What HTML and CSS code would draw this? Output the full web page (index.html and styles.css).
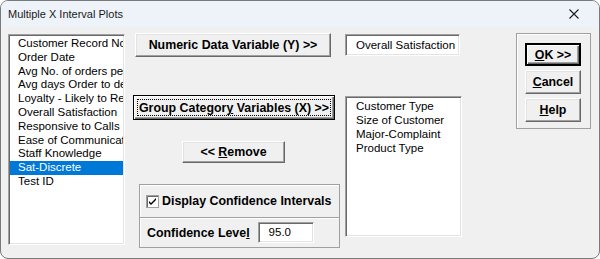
FILE: index.html
```html
<!DOCTYPE html>
<html lang="en">
<head>
  <meta charset="UTF-8">
  <title>Multiple X Interval Plots</title>
  <link rel="stylesheet" href="styles.css">
</head>
<body>

<div class="window">
  <div class="titlebar">
    <span class="title">Multiple X Interval Plots</span>
    <svg class="close" width="10" height="10" viewBox="0 0 10 10">
      <path d="M0.5 0.5 L9.5 9.5 M9.5 0.5 L0.5 9.5" stroke="#1a1a1a" stroke-width="1.1" fill="none"/>
    </svg>
  </div>

  <div class="content">
    <ul class="listbox vars">
      <li>Customer Record No</li>
      <li>Order Date</li>
      <li>Avg No. of orders per month</li>
      <li>Avg days Order to delivery</li>
      <li>Loyalty - Likely to Recommend</li>
      <li>Overall Satisfaction</li>
      <li>Responsive to Calls</li>
      <li>Ease of Communication</li>
      <li>Staff Knowledge</li>
      <li class="selected">Sat-Discrete</li>
      <li>Test ID</li>
    </ul>

    <div class="middle">
      <button class="btn numeric">Numeric Data Variable (Y) &gt;&gt;</button>
      <button class="btn default group"><span class="focus">Group Categor<u>y</u> Variables (X) &gt;&gt;</span></button>
      <button class="btn remove">&lt;&lt; <u>R</u>emove</button>
      <div class="panel check-panel">
        <svg class="checkbox" width="13" height="13" viewBox="0 0 13 13">
          <rect x="0.5" y="0.5" width="12" height="12" fill="#fff" stroke="#a0a0a0"/>
          <path d="M1.5 12 V1.5 H12" stroke="#696969" fill="none"/>
          <path d="M3 6 L5 8 L10 3 L10 5 L5 10 L3 8 Z" fill="#000"/>
        </svg>
        <span class="label">Display Confidence Intervals</span>
      </div>
      <div class="panel level-panel">
        <span class="label">Confidence Leve<u>l</u></span>
        <div class="field level">95.0</div>
      </div>
    </div>

    <div class="right">
      <div class="field ybox">Overall Satisfaction</div>
      <ul class="listbox xvars">
        <li>Customer Type</li>
        <li>Size of Customer</li>
        <li>Major-Complaint</li>
        <li>Product Type</li>
      </ul>
    </div>

    <div class="actions">
      <button class="btn default ok"><u>O</u>K &gt;&gt;</button>
      <button class="btn"><u>C</u>ancel</button>
      <button class="btn"><u>H</u>elp</button>
    </div>
  </div>
</div>

</body>
</html>
```

FILE: styles.css
```css
body {
  margin: 0;
  background: #ffffff;
  font-family: "Liberation Sans", Arial, sans-serif;
  font-size: 11.5px;
  color: #000;
}

.window {
  width: 600px;
  height: 259px;
  box-sizing: border-box;
  border: 1px solid #7a7a7a;
  border-radius: 8px;
  background: #f0f0f0;
  overflow: hidden;
}

.titlebar {
  height: 26px;
  background: #eef3f9;
  display: flex;
  align-items: center;
  justify-content: space-between;
  padding: 0 20px 0 7px;
}

.title {
  font-size: 11px;
  color: #1a1a1a;
}

.content {
  display: flex;
  align-items: flex-start;
  padding: 7px 0 0 7px;
}

/* sunken white fields */
.listbox,
.field {
  background: #fff;
  box-sizing: border-box;
  border: 1px solid;
  border-color: #a0a0a0 #fff #fff #a0a0a0;
  box-shadow: inset 1px 1px #696969, inset -1px -1px #e3e3e3;
}

.listbox {
  list-style: none;
  margin: 0;
  padding: 2px 1px;
  overflow: hidden;
}

.listbox li {
  white-space: nowrap;
  overflow: hidden;
}

.vars {
  width: 117px;
  height: 211px;
}

.vars li {
  height: 13.8px;
  line-height: 13.8px;
  padding-left: 8px;
}

.vars li.selected {
  background: #0078d7;
  color: #fff;
}

.xvars {
  width: 117px;
  height: 141px;
  margin-top: 40px;
}

.xvars li {
  height: 14px;
  line-height: 14px;
  padding-left: 9px;
}

/* classic raised buttons */
.btn {
  font-family: "Liberation Sans", Arial, sans-serif;
  font-size: 12.4px;
  font-weight: bold;
  color: #000;
  background: #f0f0f0;
  box-sizing: border-box;
  border: 1px solid;
  border-color: #fff #696969 #696969 #fff;
  box-shadow: inset -1px -1px #a0a0a0, inset 1px 1px #e3e3e3;
  padding: 0;
  white-space: nowrap;
  cursor: pointer;
}

.btn.default {
  border: 1px solid #000;
  box-shadow: inset 1px 1px #fff, inset -1px -1px #696969, inset -2px -2px #a0a0a0;
}

.middle {
  display: flex;
  flex-direction: column;
  align-items: flex-start;
  width: 207px;
  margin-left: 8px;
}

.numeric {
  width: 196px;
  height: 24px;
  margin: -1px 0 0 2px;
}

.group {
  width: 202px;
  height: 25px;
  margin-top: 38px;
  padding: 3px;
}

.focus {
  display: block;
  height: 100%;
  box-sizing: border-box;
  border: 1px dotted #000;
  line-height: 16px;
}

.remove {
  width: 103px;
  height: 22px;
  margin: 21px 0 0 49px;
}

.panel {
  width: 201px;
  margin-left: 6px;
  box-sizing: border-box;
  border: 1px solid #a0a0a0;
  box-shadow: inset 1px 1px #fff;
  display: flex;
  align-items: center;
  font-size: 12.4px;
  font-weight: bold;
}

.check-panel {
  height: 34px;
  margin-top: 21px;
  padding-left: 6px;
  gap: 3px;
}

.level-panel {
  height: 30px;
  border-top: none;
  padding-left: 7px;
  gap: 8px;
}

.level {
  width: 56px;
  height: 21px;
  line-height: 19px;
  padding-left: 10px;
  font-size: 11.5px;
  font-weight: normal;
}

.right {
  display: flex;
  flex-direction: column;
  margin-left: 5px;
}

.ybox {
  width: 115px;
  height: 22px;
  line-height: 20px;
  padding-left: 10px;
  white-space: nowrap;
  overflow: hidden;
}

.actions {
  display: flex;
  flex-direction: column;
  gap: 4px;
  width: 75px;
  height: 96px;
  box-sizing: border-box;
  margin: -1px 0 0 54px;
  padding: 9px 0 0 8px;
  border: 1px solid #a0a0a0;
  box-shadow: inset 1px 1px #fff;
}

.actions .btn {
  width: 56px;
  height: 24px;
}

.actions .ok {
  height: 23px;
  border-width: 2px;
}
```
